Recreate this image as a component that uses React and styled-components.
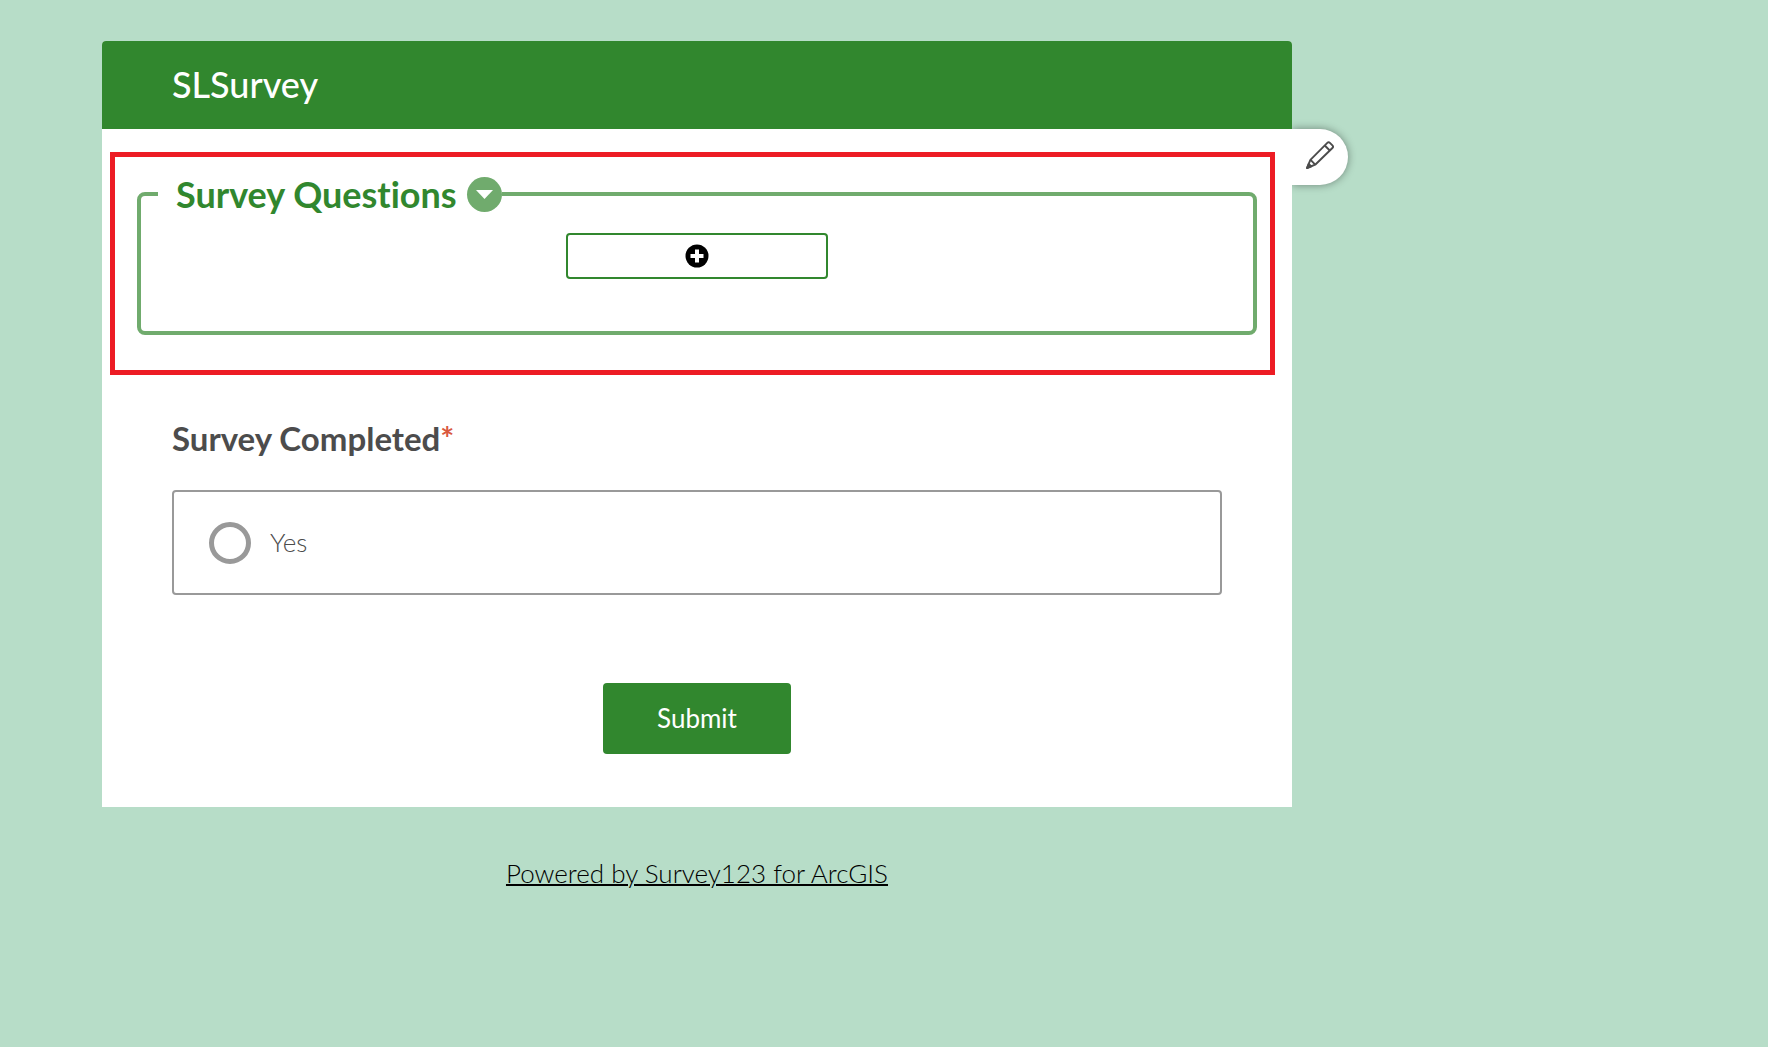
import React from "react";
import styled, { createGlobalStyle } from "styled-components";

export default function App() {
  return (
    <>
      <GlobalStyle />
      <Page>
        <Card>
          <Header>
            <Title>SLSurvey</Title>
          </Header>
          <EditTab type="button" aria-label="Edit">
            <PencilIcon />
          </EditTab>
          <Highlight>
            <Group>
              <Legend>
                <GroupToggle type="button">
                  Survey Questions
                  <ArrowBadge>
                    <svg width="17" height="9" viewBox="0 0 17 9">
                      <path d="M0 0h17L8.500 9z" fill="#fff" />
                    </svg>
                  </ArrowBadge>
                </GroupToggle>
              </Legend>
              <AddButton type="button" aria-label="Add">
                <PlusIcon />
              </AddButton>
            </Group>
          </Highlight>
          <Form onSubmit={(e) => e.preventDefault()}>
            <Question>
              Survey Completed<Required>*</Required>
            </Question>
            <Choice>
              <Radio type="radio" name="completed" value="yes" />
              <ChoiceText>Yes</ChoiceText>
            </Choice>
            <Submit type="submit">Submit</Submit>
          </Form>
        </Card>
        <Footer>
          <PoweredBy href="#">Powered by Survey123 for ArcGIS</PoweredBy>
        </Footer>
      </Page>
    </>
  );
}

function PencilIcon() {
  return (
    <svg
      width="28"
      height="28"
      viewBox="0 0 28 28"
      fill="none"
      stroke="#4c4c4c"
      strokeWidth="1.900"
      strokeLinejoin="round"
    >
      <path d="M1 27l3.400-8.200L21.300 1.900q1.300-1.300 2.600 0l2.500 2.500q1.300 1.300 0 2.600L9.200 23.700z" />
      <path d="M4.600 18.800l4.600 4.900M18.800 4.500l5 5" />
      <path d="M1 27l1.700-4.200 2.600 2.600z" fill="#4c4c4c" />
    </svg>
  );
}

function PlusIcon() {
  return (
    <svg width="24" height="24" viewBox="0 0 24 24">
      <circle cx="12" cy="12" r="11.500" fill="#000" />
      <path d="M10 5.500h4V10h4.500v4H14v4.500h-4V14H5.500v-4H10z" fill="#fff" />
    </svg>
  );
}

const GlobalStyle = createGlobalStyle`
  * {
    box-sizing: border-box;
  }

  body {
    margin: 0;
    background: #b7ddc8;
    color: #4c4c4c;
    font-family: Lato, "Liberation Sans", sans-serif;
    font-variant-ligatures: none;
  }

  button, input {
    font-family: inherit;
    font-variant-ligatures: inherit;
    cursor: pointer;
  }
`;

const Page = styled.main`
  padding: 41px 476px 48px 102px;
`;

const Card = styled.section`
  position: relative;
  padding-bottom: 53px;
  border-radius: 4px 4px 0 0;
  background: #fff;
`;

const Header = styled.header`
  display: flex;
  align-items: center;
  height: 88px;
  padding: 0 70px 2px;
  border-radius: 4px 4px 0 0;
  background: #31872e;
`;

const Title = styled.h1`
  margin: 0;
  color: #fff;
  font-size: 36px;
  font-weight: 500;
  line-height: 44px;
`;

/* hangs off the right side of the card, just under the header */
const EditTab = styled.button`
  position: absolute;
  top: 88px;
  left: 100%;
  display: flex;
  align-items: center;
  justify-content: center;
  width: 56px;
  height: 56px;
  padding: 0 0 4px;
  border: 0;
  border-radius: 0 28px 28px 0;
  background: #fff;
  box-shadow: 0 0 8px rgba(0, 0, 0, 0.4);
  clip-path: inset(-10px -10px -10px 0);
`;

const Highlight = styled.div`
  margin: 23px 17px 0 8px;
  padding: 20px 13px 35px 22px;
  border: 5px solid #ed1c24;
`;

const Group = styled.fieldset`
  min-width: 0;
  margin: 0;
  padding: 22px 17px 52px;
  border: 4px solid #70ab6d;
  border-radius: 8px;
`;

const Legend = styled.legend`
  padding: 0;
`;

const GroupToggle = styled.button`
  display: flex;
  align-items: flex-start;
  gap: 10px;
  height: 34px;
  padding: 0 0 0 18px;
  border: 0;
  background: none;
  color: #31872e;
  font-size: 36px;
  font-weight: 700;
  line-height: 34px;
`;

const ArrowBadge = styled.span`
  display: flex;
  align-items: center;
  justify-content: center;
  width: 35px;
  height: 35px;
  border-radius: 50%;
  background: #70ab6d;
`;

const AddButton = styled.button`
  display: flex;
  align-items: center;
  justify-content: center;
  width: 262px;
  height: 46px;
  margin: 0 auto;
  padding: 0;
  border: 2px solid #31872e;
  border-radius: 4px;
  background: #fff;
`;

const Form = styled.form`
  display: flex;
  flex-direction: column;
  padding: 43px 70px 0;
`;

const Question = styled.h2`
  margin: 0 0 32px;
  font-size: 33px;
  font-weight: 700;
  line-height: 40px;
`;

const Required = styled.span`
  color: #d9583f;
`;

const Choice = styled.label`
  display: flex;
  align-items: center;
  gap: 19px;
  height: 105px;
  padding: 0 35px;
  border: 2px solid #999;
  border-radius: 4px;
  font-size: 26px;
  font-weight: 300;
  cursor: pointer;
`;

const ChoiceText = styled.span`
  padding-bottom: 2px;
`;

const Radio = styled.input`
  appearance: none;
  width: 42px;
  height: 42px;
  margin: 0;
  border: 5px solid #999;
  border-radius: 50%;

  &:checked {
    border-color: #31872e;
  }
`;

const Submit = styled.button`
  align-self: center;
  width: 188px;
  height: 71px;
  margin-top: 88px;
  padding: 0 0 2px;
  border: 0;
  border-radius: 4px;
  background: #31872e;
  color: #fff;
  font-size: 26px;
`;

const Footer = styled.footer`
  padding-top: 49px;
  text-align: center;
`;

const PoweredBy = styled.a`
  color: #000;
  font-size: 26px;
  font-weight: 300;
  line-height: 34px;
  text-decoration-thickness: 2px;
`;
